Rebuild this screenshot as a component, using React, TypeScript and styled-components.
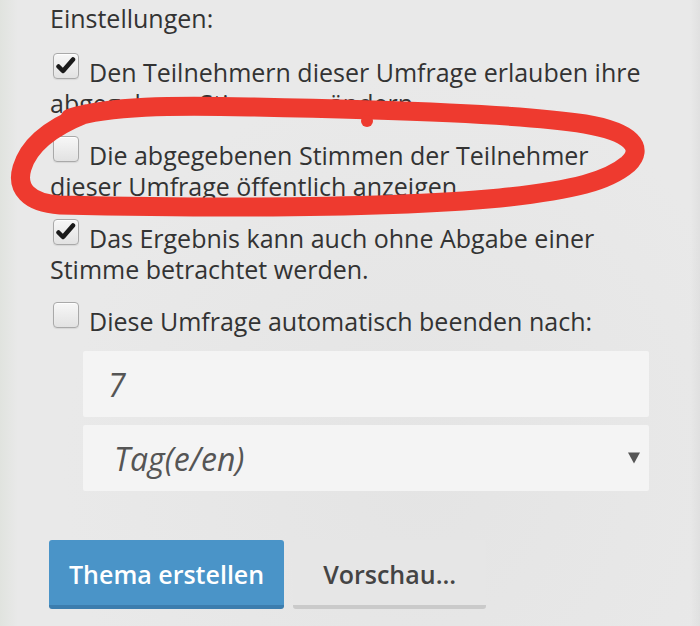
import React from "react";
import styled, { createGlobalStyle } from "styled-components";

const GlobalStyle = createGlobalStyle`
  html, body {
    margin: 0;
    padding: 0;
  }
  body {
    background: #e7e7e7;
    font-family: "Open Sans", "Noto Sans", sans-serif;
    color: #333;
  }
`;

const Page = styled.div`
  position: relative;
  width: 700px;
  height: 626px;
  overflow: hidden;
  box-sizing: border-box;
  padding: 3px 0 0 50px;
  background:
    linear-gradient(90deg, rgba(214, 220, 210, 0.45) 0px, rgba(231, 231, 231, 0) 18px),
    linear-gradient(270deg, rgba(214, 214, 214, 0.45) 0px, rgba(231, 231, 231, 0) 10px),
    radial-gradient(ellipse at 60% 75%, #e4e4e4 0%, #e9e9e9 60%);
`;

const Form = styled.div`
  width: 600px;
  display: flex;
  flex-direction: column;
`;

const Heading = styled.div`
  font-size: 25px;
  line-height: 30.5px;
  margin-bottom: 23.5px;
`;

const OptionList = styled.div`
  display: flex;
  flex-direction: column;
  gap: 22px;
`;

const Option = styled.label`
  display: block;
  font-size: 25px;
  line-height: 30.5px;
  color: #333;
`;

const Box = styled.span`
  display: inline-block;
  position: relative;
  box-sizing: border-box;
  width: 26px;
  height: 26px;
  margin: -8px 10px 0 3px;
  vertical-align: 3px;
  border: 1px solid #a9a9a9;
  border-radius: 4px;
  background: linear-gradient(180deg, #f7f7f7 0%, #e2e2e2 100%);
  box-shadow: inset 0 1px 1px rgba(255, 255, 255, 0.9), 0 1px 1px rgba(0, 0, 0, 0.08);
  svg {
    position: absolute;
    left: 2px;
    top: 2px;
  }
`;

const Fields = styled.div`
  margin: 14.5px 0 0 33px;
  width: 566px;
  display: flex;
  flex-direction: column;
  gap: 8px;
`;

const Field = styled.div<{ $pad: number }>`
  position: relative;
  height: 66px;
  box-sizing: border-box;
  padding-left: ${(p) => p.$pad}px;
  display: flex;
  align-items: center;
  background: #f4f4f4;
  border-radius: 2px;
  font-size: 32px;
  font-style: italic;
  color: #555;
`;

const Arrow = styled.span`
  position: absolute;
  right: 9px;
  top: 50%;
  transform: translateY(-50%);
  width: 0;
  height: 0;
  border-left: 6px solid transparent;
  border-right: 6px solid transparent;
  border-top: 11px solid #555;
`;

const Buttons = styled.div`
  display: flex;
  gap: 9px;
  margin: 49px 0 0 -1px;
`;

const Button = styled.button<{ $primary?: boolean; $padX: number }>`
  height: 69px;
  box-sizing: border-box;
  padding: 3px ${(p) => p.$padX}px 0;
  font-family: "Open Sans", "Noto Sans", sans-serif;
  font-size: 25px;
  font-weight: 600;
  border: none;
  border-radius: 3px;
  cursor: pointer;
  color: ${(p) => (p.$primary ? "#ffffff" : "#444444")};
  background: ${(p) => (p.$primary ? "#4a94c8" : "#e6e6e6")};
  border-bottom: 4px solid ${(p) => (p.$primary ? "#3c7dae" : "#cacaca")};
`;

const Annotation = styled.svg`
  position: absolute;
  left: 0;
  top: 0;
  pointer-events: none;
`;

function Check({ checked }: { checked?: boolean }) {
  return (
    <Box>
      {checked && (
        <svg width="20" height="20" viewBox="0 0 20 20">
          <path
            d="M2.5 10.5 L7 15 L17 3.5"
            fill="none"
            stroke="#1a1a1a"
            strokeWidth="4.5"
            strokeLinecap="round"
            strokeLinejoin="round"
          />
        </svg>
      )}
    </Box>
  );
}

export default function App() {
  return (
    <>
      <GlobalStyle />
      <Page>
        <Form>
          <Heading>Einstellungen:</Heading>
          <OptionList>
            <Option>
              <Check checked />
              Den Teilnehmern dieser Umfrage erlauben ihre abgegebene Stimme zu ändern
            </Option>
            <Option>
              <Check />
              Die abgegebenen Stimmen der Teilnehmer dieser Umfrage öffentlich anzeigen
            </Option>
            <Option>
              <Check checked />
              Das Ergebnis kann auch ohne Abgabe einer Stimme betrachtet werden.
            </Option>
            <Option>
              <Check />
              Diese Umfrage automatisch beenden nach:
            </Option>
          </OptionList>
          <Fields>
            <Field $pad={25}>7</Field>
            <Field $pad={31}>
              Tag(e/en)
              <Arrow />
            </Field>
          </Fields>
          <Buttons>
            <Button $primary $padX={20}>Thema erstellen</Button>
            <Button $padX={30}>Vorschau...</Button>
          </Buttons>
        </Form>
        <Annotation width="700" height="626" viewBox="0 0 700 626">
          <path
            d="M 70 118 C 110 106, 170 105, 250 107 C 400 110, 520 114, 585 124 C 632 132, 645 148, 628 164 C 608 181, 575 190, 500 198 C 380 209, 200 208, 60 205 C 28 203, 16 188, 22 168 C 28 148, 45 130, 85 114"
            fill="none"
            stroke="#ee3a2f"
            strokeWidth="19"
            strokeLinecap="round"
            strokeLinejoin="round"
          />
          <circle cx="367" cy="121" r="6" fill="#ee3a2f" />
        </Annotation>
      </Page>
    </>
  );
}
